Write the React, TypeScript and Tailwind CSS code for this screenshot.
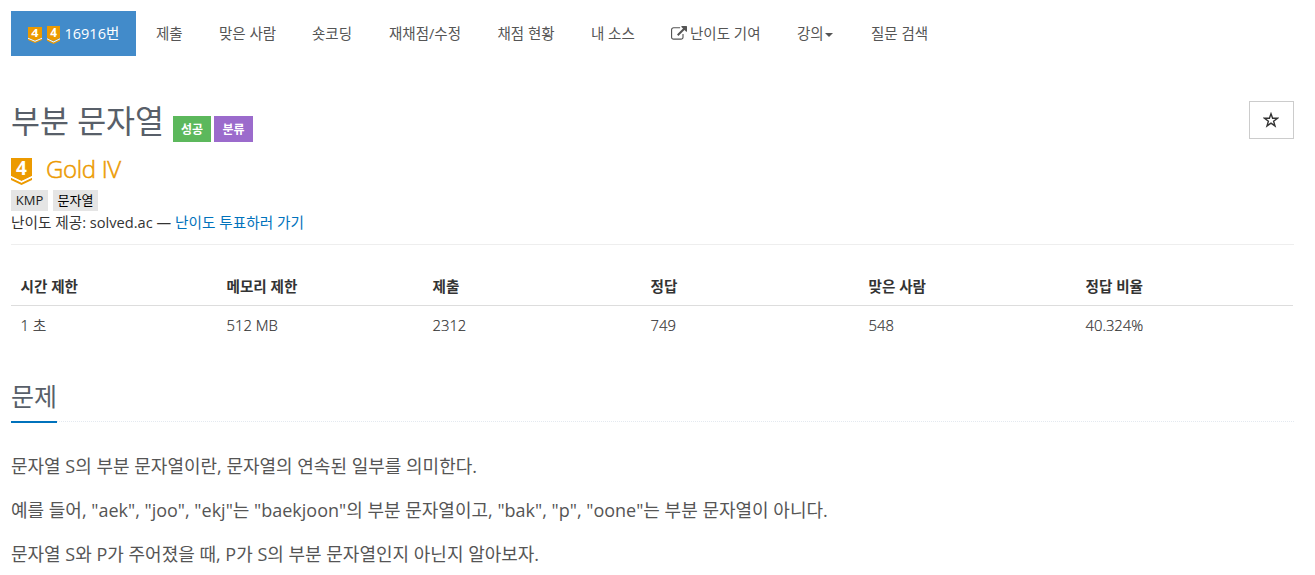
import clsx from "clsx";
import { ReactNode } from "react";

const columns = [
    { title: "시간 제한", value: "1 초", width: "w-[206px]" },
    { title: "메모리 제한", value: "512 MB", width: "w-[206px]" },
    { title: "제출", value: "2312", width: "w-[218px]" },
    { title: "정답", value: "749", width: "w-[218px]" },
    { title: "맞은 사람", value: "548", width: "w-[217px]" },
    { title: "정답 비율", value: "40.324%", width: "w-[217px]" },
];

const paragraphs = [
    '문자열 S의 부분 문자열이란, 문자열의 연속된 일부를 의미한다.',
    '예를 들어, "aek", "joo", "ekj"는 "baekjoon"의 부분 문자열이고, "bak", "p", "oone"는 부분 문자열이 아니다.',
    '문자열 S와 P가 주어졌을 때, P가 S의 부분 문자열인지 아닌지 알아보자.',
];

const TierBadge = ({ className }: { className: string }) => (
    <svg viewBox="0 0 21 27" preserveAspectRatio="none" className={clsx("shrink-0 overflow-visible", className)}>
        <path d="M0 0H21V18L10.5 23L0 18Z" fill="#ec9a00" />
        <path d="M0 19.6L10.5 24.6L21 19.6V22L10.5 27L0 22Z" fill="#ec9a00" />
        <path d="M0 18.2L10.5 23.2L21 18.2V19.8L10.5 24.8L0 19.8Z" fill="#fff" />
        <text x="10.5" y="17.2" textAnchor="middle" fill="#fff" fontFamily="Open Sans" fontWeight="700" fontSize="19">4</text>
    </svg>
);

const ExternalLinkIcon = () => (
    <svg viewBox="0 0 1792 1792" className="mr-[3px] h-4 w-4 shrink-0" fill="currentColor">
        <path d="M1408 928v320q0 119-84.5 203.5t-203.5 84.5h-832q-119 0-203.5-84.5t-84.5-203.5v-832q0-119 84.5-203.5t203.5-84.5h704q14 0 23 9t9 23v64q0 14-9 23t-23 9h-704q-66 0-113 47t-47 113v832q0 66 47 113t113 47h832q66 0 113-47t47-113v-320q0-14 9-23t23-9h64q14 0 23 9t9 23zm384-864v512q0 26-19 45t-45 19-45-19l-176-176-652 652q-10 10-23 10t-23-10l-114-114q-10-10-10-23t10-23l652-652-176-176q-19-19-19-45t19-45 45-19h512q26 0 45 19t19 45z" />
    </svg>
);

const NavItem = ({ width, children }: { width: string, children: ReactNode }) => (
    <li className={clsx("shrink-0", width)}>
        <a href="#" className="flex h-[45px] items-center whitespace-nowrap text-[#555]">{children}</a>
    </li>
);

const App = () => {
    return (
        <div className="h-[575px] overflow-hidden bg-white pt-[11px] pr-[21px] pl-[11px] font-['Open_Sans','Noto_Sans_CJK_KR',sans-serif] text-[15px] text-[#333]">
            <ul className="flex text-[14.5px]">
                <li className="mr-5 shrink-0">
                    <a href="#" className="flex h-[45px] w-[125px] items-center bg-[#428bca] pl-[17px] whitespace-nowrap text-white">
                        <TierBadge className="mt-[3px] mr-[5px] h-4 w-3.5" />
                        <TierBadge className="mt-[3px] mr-[4.5px] h-[18px] w-[13px]" />
                        <span>16916번</span>
                    </a>
                </li>
                <NavItem width="w-[63px]">제출</NavItem>
                <NavItem width="w-[93px]">맞은 사람</NavItem>
                <NavItem width="w-[77px]">숏코딩</NavItem>
                <NavItem width="w-[108.5px]">재채점/수정</NavItem>
                <NavItem width="w-[93.5px]">채점 현황</NavItem>
                <NavItem width="w-[80px]">내 소스</NavItem>
                <NavItem width="w-[126px]"><ExternalLinkIcon />난이도 기여</NavItem>
                <NavItem width="w-[74px]">
                    강의
                    <span className="mt-[3px] ml-px border-x-[4.5px] border-t-[4.5px] border-x-transparent border-t-[#555]" />
                </NavItem>
                <NavItem width="w-[70px]">질문 검색</NavItem>
            </ul>

            <header className="mt-[45px] flex h-[41px] items-end">
                <h1 className="mr-[9px] mb-px w-[153px] text-[31.5px] leading-[41px] whitespace-nowrap text-[#585f69]">부분 문자열</h1>
                <span className="mr-[3px] flex h-[26px] w-[38px] items-center justify-center bg-[#5cb85c] pt-px text-[12px] font-bold text-white">성공</span>
                <span className="flex h-[26px] w-[39px] items-center justify-center bg-[#9b6bcc] pt-px text-[12px] font-bold text-white">분류</span>
                <button className="mb-[3px] ml-auto flex h-[38px] w-[45px] items-center justify-center border border-[#ccc] pr-0.5 pb-px">
                    <svg viewBox="0 0 16 16" className="h-4 w-4" fill="none" stroke="#333" strokeWidth="1.4">
                        <path d="M8 1.8L9.6 6.3H14.4L10.6 9.2L12 13.9L8 11.1L4 13.9L5.4 9.2L1.6 6.3H6.4Z" />
                    </svg>
                </button>
            </header>

            <div className="mt-[14px] flex h-[30px] items-center">
                <TierBadge className="mr-[14px] h-[27px] w-[21px]" />
                <span className="pb-1 text-[24px] leading-[30px] font-light tracking-[-0.35px] text-[#ec9a00] [-webkit-text-stroke:0.5px_#ec9a00]">Gold IV</span>
            </div>
            <div className="mt-1 flex h-[21px] gap-[5px] text-[13px] leading-[21px] text-black">
                <span className="w-[37px] bg-[#e5e5e5] text-center text-[#222]">KMP</span>
                <span className="w-[45px] bg-[#e5e5e5] text-center">문자열</span>
            </div>
            <p className="h-[22px] text-[14.65px] leading-[23px] whitespace-nowrap">
                난이도 제공: solved.ac — <a href="#" className="text-[#0072bc]">난이도 투표하러 가기</a>
            </p>
            <hr className="mt-[11px] border-[#eee]" />

            <table className="mt-[22px] w-[1282px] table-fixed text-left">
                <thead>
                    <tr className="h-[38px] border-b border-[#ddd] text-[14.6px]">
                        {columns.map(({ title, width }) => (
                            <th key={title} className={clsx("pt-[3px] pl-[9.5px] font-bold", width)}>{title}</th>
                        ))}
                    </tr>
                </thead>
                <tbody>
                    <tr className="h-[39px] font-light text-[#333] [-webkit-text-stroke:0.2px_#333]">
                        {columns.map(({ title, value }) => (
                            <td key={title} className="pl-[9.5px] text-[14.8px]">{value}</td>
                        ))}
                    </tr>
                </tbody>
            </table>

            <div className="mt-[34px] h-[44px] border-b border-dotted border-[#e4e9f0]">
                <h2 className="h-[45px] w-[46px] border-b-2 border-[#0072bc] text-[25px] leading-[36px] text-[#585f69]">문제</h2>
            </div>

            <div className="mt-[30px] flex flex-col gap-4 text-[18px] leading-7 whitespace-nowrap text-[#555]">
                {paragraphs.map(text => (
                    <p key={text}>{text}</p>
                ))}
            </div>
        </div>
    )
}

export default App;
